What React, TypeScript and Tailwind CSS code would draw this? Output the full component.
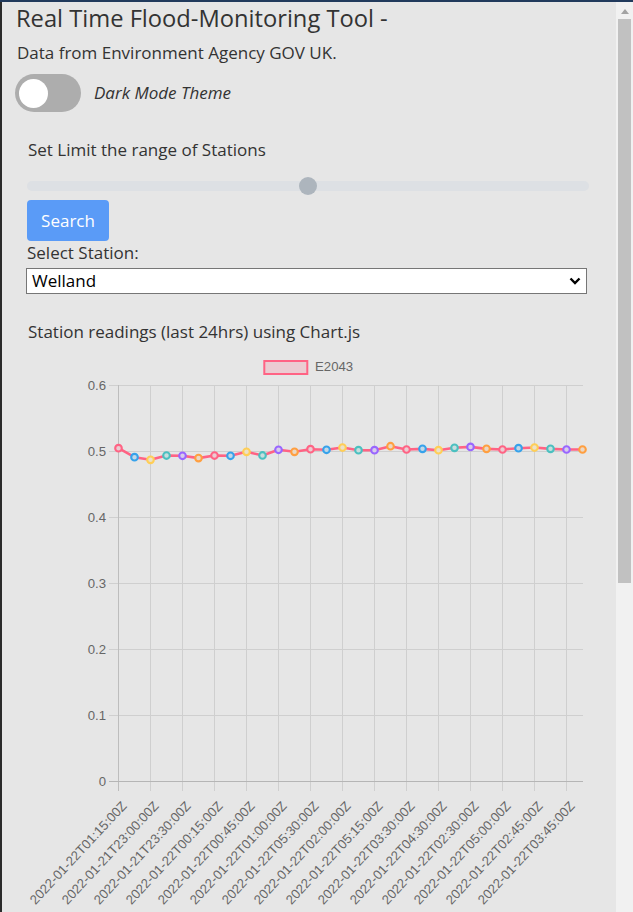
import React from "react";

const values = [
  0.505, 0.4914, 0.4874, 0.4939, 0.4935, 0.49, 0.4939, 0.4935, 0.4995, 0.494,
  0.5026, 0.4995, 0.5035, 0.5026, 0.506, 0.502, 0.502, 0.508, 0.503, 0.504,
  0.502, 0.5056, 0.507, 0.504, 0.503, 0.505, 0.506, 0.504, 0.503, 0.503,
];
const colors = ["#ff6384", "#36a2eb", "#ffce56", "#4bc0c0", "#9966ff", "#ff9f40"];
const fills = ["#ebccd2", "#c3d8e7", "#ebe1c9", "#c7dede", "#d7cceb", "#ebd8c5"];
const labels = [
  "2022-01-22T01:15:00Z",
  "2022-01-21T23:00:00Z",
  "2022-01-21T23:30:00Z",
  "2022-01-22T00:15:00Z",
  "2022-01-22T00:45:00Z",
  "2022-01-22T01:00:00Z",
  "2022-01-22T05:30:00Z",
  "2022-01-22T02:00:00Z",
  "2022-01-22T05:15:00Z",
  "2022-01-22T03:30:00Z",
  "2022-01-22T04:30:00Z",
  "2022-01-22T02:30:00Z",
  "2022-01-22T05:00:00Z",
  "2022-01-22T02:45:00Z",
  "2022-01-22T03:45:00Z",
];

const X0 = 118.5;
const Y0 = 781.5;
const px = (i: number) => X0 + i * 16;
const py = (v: number) => Y0 - v * 660;
const font = "'Liberation Sans', Arial, sans-serif";

function Chart() {
  const pts = values.map((v, i) => `${px(i)},${py(v)}`).join(" ");
  return (
    <svg width={614} height={567} viewBox="2 345 614 567" className="block shrink-0">
      <rect x={264.3} y={361} width={43} height={13} fill="rgba(255,99,132,0.2)" stroke="#ff6384" strokeWidth={2} />
      <text x={315} y={371.2} fontSize={13.2} fill="#666" fontFamily={font}>
        E2043
      </text>
      {[1, 2, 3, 4, 5, 6].map((k) => (
        <line key={k} x1={109} x2={583} y1={Y0 - k * 66} y2={Y0 - k * 66} stroke="#cfcfcf" strokeWidth={1} />
      ))}
      {labels.map((_, j) => (
        <line
          key={j}
          x1={X0 + j * 32}
          x2={X0 + j * 32}
          y1={385}
          y2={791}
          stroke={j === 0 ? "#bdbdbd" : "#cfcfcf"}
          strokeWidth={1}
        />
      ))}
      <line x1={109} x2={583} y1={Y0} y2={Y0} stroke="#b5b5b5" strokeWidth={1} />
      {[0, 1, 2, 3, 4, 5, 6].map((k) => (
        <text
          key={k}
          x={106}
          y={Y0 - k * 66 + 4.2}
          fontSize={13.2}
          fill="#666"
          textAnchor="end"
          fontFamily={font}
        >
          {k === 0 ? "0" : `0.${k}`}
        </text>
      ))}
      {labels.map((l, j) => {
        const ax = X0 + j * 32 + 9;
        const ay = 806.5;
        return (
          <text
            key={l + j}
            x={ax}
            y={ay}
            fontSize={13.2}
            fill="#666"
            textAnchor="end"
            fontFamily={font}
            transform={`rotate(-47 ${ax} ${ay})`}
          >
            {l}
          </text>
        );
      })}
      <polyline points={pts} fill="none" stroke="#ff6384" strokeWidth={2.6} strokeLinejoin="round" />
      {values.map((v, i) => (
        <circle
          key={i}
          cx={px(i)}
          cy={py(v)}
          r={3.3}
          fill={fills[i % 6]}
          stroke={colors[i % 6]}
          strokeWidth={2.1}
        />
      ))}
    </svg>
  );
}

export default function App() {
  return (
    <div className="w-[633px] h-[912px] overflow-hidden flex flex-col font-['Open_Sans',sans-serif] text-[#333333]">
      <div className="h-[2px] bg-[#213a5c] shrink-0" />
      <div className="flex flex-1 min-h-0">
        <div className="w-[2px] bg-[#2b2b2b] shrink-0" />
        <div className="flex-1 bg-[#e6e6e6] flex flex-col overflow-hidden">
          <h1 className="h-[32px] leading-[32px] text-[23.7px] pl-[14px] whitespace-nowrap font-normal">
            Real Time Flood-Monitoring Tool -
          </h1>
          <p className="mt-[7px] leading-[24px] text-[17px] pl-[15px] whitespace-nowrap">
            Data from Environment Agency GOV UK.
          </p>
          <div className="mt-[9px] pl-[13px] flex items-center gap-[13px]">
            <div className="w-[66px] h-[38px] rounded-full bg-[#adadad] flex items-center pl-[4px] shrink-0">
              <div className="w-[29px] h-[29px] rounded-full bg-white" />
            </div>
            <span className="italic text-[17px] leading-[24px]">Dark Mode Theme</span>
          </div>
          <p className="mt-[26px] leading-[24px] text-[17px] pl-[26px] whitespace-nowrap">
            Set Limit the range of Stations
          </p>
          <div className="mt-[15px] ml-[25px] w-[562px] h-[18px] relative shrink-0">
            <div className="absolute left-0 right-0 top-[4px] h-[10px] rounded-full bg-[#dde0e4]" />
            <div className="absolute left-[272px] top-0 w-[18px] h-[18px] rounded-full bg-[#adb5bd]" />
          </div>
          <button className="mt-[5px] ml-[25px] w-[82px] h-[41px] rounded-[4px] bg-[#5a9bf7] text-white text-[17px] leading-[24px] flex items-center justify-center shrink-0">
            Search
          </button>
          <p className="leading-[24px] text-[17px] pl-[25px] whitespace-nowrap">Select Station:</p>
          <div className="mt-[3px] ml-[24px] w-[561px] h-[26px] shrink-0 bg-white border border-[#767676] flex items-center justify-between pl-[5px] pr-[5px] text-black">
            <span className="text-[17px] leading-[24px]">Welland</span>
            <svg width={12} height={8} viewBox="0 0 12 8">
              <path d="M1.5 1.5 L6 6 L10.5 1.5" fill="none" stroke="#000" strokeWidth={2.4} />
            </svg>
          </div>
          <p className="mt-[26px] leading-[24px] text-[17px] pl-[26px] whitespace-nowrap">
            Station readings (last 24hrs) using Chart.js
          </p>
          <div className="mt-[1px]">
            <Chart />
          </div>
        </div>
        <div className="w-[17px] bg-[#f1f1f1] shrink-0 flex flex-col items-center">
          <div className="h-[17px] w-full flex items-start justify-center pt-[7px]">
            <svg width={8} height={5} viewBox="0 0 8 5">
              <path d="M0 5 L4 0 L8 5 Z" fill="#a3a3a3" />
            </svg>
          </div>
          <div className="w-[13px] h-[564px] bg-[#c1c1c1]" />
        </div>
      </div>
    </div>
  );
}
